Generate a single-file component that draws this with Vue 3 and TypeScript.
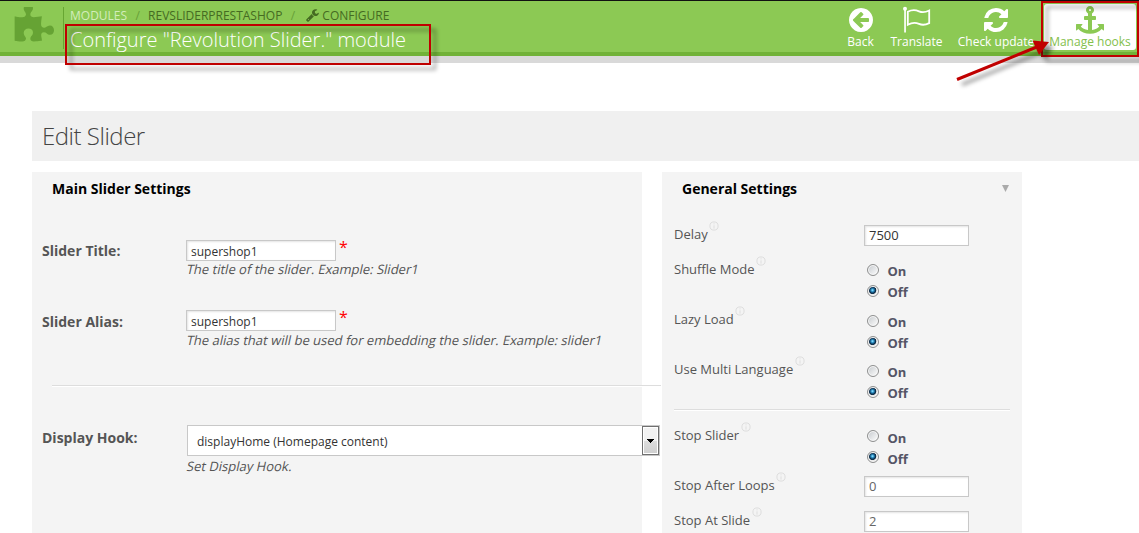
<script setup lang="ts">
interface Crumb { text: string; kind: 'light' | 'dark'; wrench?: boolean }
interface Tool { id: string; label: string; path: string; active?: boolean }
interface Field { label: string; cls: string; value: string; hint: string }
interface Setting { label: string; cls: string; value?: string; divider?: boolean; muted?: boolean }

const puzzle = 'M1755 1083q0 81-44.5 135t-123.5 54q-41 0-77.5-17.5t-59-38-56.5-38-71-17.5q-110 0-110 124 0 39 16 115t15 115v5q-22 0-33 1-34 3-97.5 11.5t-115.5 13.5-98 5q-61 0-103-26.5t-42-83.5q0-37 17.5-71t38-56.5 38-59 17.5-77.5q0-79-54-123.5t-135-44.5q-84 0-143 45.5t-59 127.5q0 43 15 83t33.5 64.5 33.5 53 15 50.5q0 45-46 89-37 35-117 35-95 0-245-24-9-2-27.5-4t-27.5-4l-13-2q-1 0-3-1-2 0-2-1v-1024q2 1 17.5 3.5t34 5 21.5 3.5q150 24 245 24 80 0 117-35 46-44 46-89 0-22-15-50.5t-33.5-53-33.5-64.5-15-83q0-82 59-127.5t144-45.5q80 0 134 44.5t54 123.5q0 41-17.5 77.5t-38 59-38 56.5-17.5 71q0 57 42 83.5t103 26.5q64 0 180-15t163-17v2q-1 2-3.5 17.5t-5 34-3.5 21.5q-24 150-24 245 0 80 35 117 44 46 89 46 22 0 50.5-15t53-33.5 64.5-33.5 83-15q82 0 127.5 59t45.5 143z'
const wrench = 'M448 1472q0-26-19-45t-45-19-45 19-19 45 19 45 45 19 45-19 19-45zm644-420l-682 682q-37 37-90 37-52 0-91-37l-106-108q-38-36-38-90 0-53 38-91l681-681q39 98 114.5 173.5t173.5 114.5zm634-435q0 39-23 106-47 134-164.5 217.5t-258.5 83.5q-185 0-316.5-131.5t-131.5-316.5 131.5-316.5 316.5-131.5q58 0 121.5 16.5t107.5 46.5q16 11 16 28t-16 28l-293 169v224l193 107q5-3 79-48.5t135.5-81 70.5-35.5q15 0 23.5 10t8.5 25z'

const crumbs: Crumb[] = [
  { text: 'MODULES', kind: 'light' },
  { text: 'REVSLIDERPRESTASHOP', kind: 'dark' },
  { text: 'CONFIGURE', kind: 'dark', wrench: true },
]

const tools: Tool[] = [
  { id: 'back', label: 'Back', path: 'M1408 960v-128q0-26-19-45t-45-19h-502l189-189q19-19 19-45t-19-45l-91-91q-18-18-45-18t-45 18l-362 362-91 91q-18 18-18 45t18 45l91 91 362 362q18 18 45 18t45-18l91-91q18-18 18-45t-18-45l-189-189h502q26 0 45-19t19-45zm256-64q0 209-103 385.5t-279.5 279.5-385.5 103-385.5-103-279.5-279.5-103-385.5 103-385.5 279.5-279.5 385.5-103 385.5 103 279.5 279.5 103 385.5z' },
  { id: 'translate', label: 'Translate', path: '' },
  { id: 'update', label: 'Check update', path: 'M1639 1056q0 5-1 7-64 268-268 434.5t-478 166.5q-146 0-282.5-55t-243.5-157l-129 129q-19 19-45 19t-45-19-19-45v-448q0-26 19-45t45-19h448q26 0 45 19t19 45-19 45l-137 137q71 66 161 102t187 36q134 0 250-65t186-179q11-17 53-117 8-23 30-23h192q13 0 22.5 9.5t9.5 22.5zm25-800v448q0 26-19 45t-45 19h-448q-26 0-45-19t-19-45 19-45l138-138q-148-137-349-137-134 0-250 65t-186 179q-11 17-53 117-8 23-30 23h-199q-13 0-22.5-9.5t-9.5-22.5v-7q65-268 270-434.5t480-166.5q146 0 284 55.5t245 156.5l130-129q19-19 45-19t45 19 19 45z' },
  { id: 'hooks', label: 'Manage hooks', active: true, path: 'M960 256q0-26-19-45t-45-19-45 19-19 45 19 45 45 19 45-19 19-45zm832 928v352q0 22-20 30-8 2-12 2-12 0-23-9l-93-93q-119 143-318.5 226.5t-429.5 83.5-429.5-83.5-318.5-226.5l-93 93q-9 9-23 9-4 0-12-2-20-8-20-30v-352q0-14 9-23t23-9h352q22 0 30 20 8 19-7 35l-100 100q67 91 189.5 153.5t271.5 82.5v-647h-192q-26 0-45-19t-19-45v-128q0-26 19-45t45-19h192v-163q-58-34-93-92.5t-35-128.5q0-106 75-181t181-75 181 75 75 181q0 70-35 128.5t-93 92.5v163h192q26 0 45 19t19 45v128q0 26-19 45t-45 19h-192v647q149-20 271.5-82.5t189.5-153.5l-100-100q-15-16-7-35 8-20 30-20h352q14 0 23 9t9 23z' },
]

const fields: Field[] = [
  { label: 'Slider Title:', cls: 'title', value: 'supershop1', hint: 'The title of the slider. Example: Slider1' },
  { label: 'Slider Alias:', cls: 'alias', value: 'supershop1', hint: 'The alias that will be used for embedding the slider. Example: slider1' },
]

const settings: Setting[] = [
  { label: 'Delay', cls: 'h35', value: '7500' },
  { label: 'Shuffle Mode', cls: 'h50' },
  { label: 'Lazy Load', cls: 'h50 low' },
  { label: 'Use Multi Language', cls: 'h50 low', divider: true },
  { label: 'Stop Slider', cls: 'h50 late' },
  { label: 'Stop After Loops', cls: 'h35', value: '0', muted: true },
  { label: 'Stop At Slide', cls: 'h35', value: '2', muted: true },
]
</script>

<template>
  <div class="page">
    <header class="head">
      <svg class="puzzle" viewBox="64 100 1691 1560" preserveAspectRatio="none"><path :d="puzzle" /></svg>
      <div class="heading">
        <nav class="crumbs">
          <template v-for="(c, i) in crumbs" :key="c.text">
            <i v-if="i" class="slash">/</i>
            <svg v-if="c.wrench" class="wrench" viewBox="60 120 1680 1660"><path :d="wrench" /></svg>
            <span :class="c.kind">{{ c.text }}</span>
          </template>
        </nav>
        <h1>Configure "Revolution Slider." module</h1>
      </div>
      <div class="tools">
        <a v-for="t in tools" :key="t.id" :class="['tool', t.id, { active: t.active }]">
          <svg v-if="t.path" class="ticon" viewBox="0 0 1792 1792"><path :d="t.path" /></svg>
          <svg v-else class="ticon flag" viewBox="0 0 28 28">
            <circle cx="2" cy="2.7" r="2" />
            <path d="M1.2 3h1.7v23.500H1.2z" />
            <path class="cloth" d="M4.8 5.7C9 3.600 12 3.600 16 5.300c3.500 1.500 6.500 1 10.200-.8v12.600c-3.800 2-6.800 2.300-10.200.8-4-1.800-7-1.400-11.200.8z" />
          </svg>
          <span>{{ t.label }}</span>
        </a>
      </div>
    </header>

    <div class="edit"><h2>Edit Slider</h2></div>

    <main class="columns">
      <section class="panel main">
        <h3>Main Slider Settings</h3>
        <div v-for="f in fields" :key="f.label" :class="['field', f.cls]">
          <label>{{ f.label }}</label>
          <div class="control">
            <div class="line"><div class="box wide">{{ f.value }}</div><b class="star">*</b></div>
            <em>{{ f.hint }}</em>
          </div>
        </div>
        <div class="rule"></div>
        <div class="field hook">
          <label>Display Hook:</label>
          <div class="control">
            <div class="select">
              <span>displayHome (Homepage content)</span>
              <div class="drop"><svg viewBox="0 0 7 4" shape-rendering="crispEdges"><path d="M0 0h7v1H6v1H5v1H4v1H3V3H2V2H1V1H0z" /></svg></div>
            </div>
            <em>Set Display Hook.</em>
          </div>
        </div>
      </section>

      <section class="panel general">
        <div class="top">
          <h3>General Settings</h3>
          <svg class="tri" viewBox="0 0 7 7"><path d="M0 0h7L3.500 7z" /></svg>
        </div>
        <template v-for="s in settings" :key="s.label">
          <div :class="['setting', s.cls, { muted: s.muted }]">
            <label>{{ s.label }}</label>
            <svg class="info" viewBox="0 0 10 10"><circle cx="5" cy="5" r="4.100" /><path d="M5 2.300v1M5 4.300v3.300" /></svg>
            <div class="value">
              <div v-if="s.value" class="box small">{{ s.value }}</div>
              <template v-else>
                <div class="radio"><i></i><b>On</b></div>
                <div class="radio on"><i></i><b>Off</b></div>
              </template>
            </div>
          </div>
          <div v-if="s.divider" class="divider"></div>
        </template>
      </section>
    </main>

    <svg class="marks" viewBox="0 0 1139 100">
      <g class="shadowed">
        <rect x="66" y="25" width="364" height="39" />
        <rect x="1042" y="2" width="96" height="54" />
      </g>
      <g class="shadowed arrow">
        <path class="shaft" d="M957 79.500L1038 46.500" />
        <path class="tip" d="M1049 42L1032.500 40.500L1039 55z" />
      </g>
    </svg>
  </div>
</template>

<style>
body { margin: 0; background: #fff; overflow: hidden; }
</style>

<style scoped>
.page { position: relative; width: 1139px; height: 533px; overflow: hidden; background: #fff; font-family: "Open Sans", sans-serif; font-size: 13px; color: #555; }
h1, h2, h3 { margin: 0; }
.head { box-sizing: border-box; height: 63px; display: flex; align-items: flex-start; border-top: 1px solid #111; background: linear-gradient(#8cc954 0 51px, #71b238 51px 55px, #d9d9d9 55px); }
.puzzle { width: 40px; height: 37px; margin: 6px 0 0 14px; fill: #66a334; flex: none; }
.heading { margin: 6px 0 0 9px; border-left: 1px solid #67a632; height: 42px; padding-left: 6px; width: 400px; flex: none; white-space: nowrap; }
.crumbs { display: flex; align-items: center; height: 17px; font-size: 12px; line-height: 17px; }
.light { color: #d3edbb; }
.dark { color: #456b22; }
.slash { font-style: normal; color: #67a038; width: 21px; text-align: center; flex: none; }
.wrench { width: 13px; height: 13px; fill: #456b22; margin: 0 3px 0 3px; }
h1 { font-weight: 300; font-size: 20px; line-height: 32px; color: #fff; }
.tools { margin-left: auto; display: flex; height: 52px; padding: 3px 3px 0 0; }
.tool { box-sizing: border-box; display: flex; flex-direction: column; align-items: center; height: 46px; color: #fff; fill: #fff; font-size: 12px; line-height: 16px; padding: 2px 0 0; white-space: nowrap; }
.ticon { width: 28px; height: 28px; overflow: visible; }
.back { width: 56px; }
.translate { width: 56px; }
.update { width: 103px; margin-right: -3.5px; }
.hooks { width: 92px; }
.active { background: #fff; border-radius: 3px; color: #83c04c; fill: #8cc954; }
.cloth { fill: none; stroke: #fff; stroke-width: 1.8; }
.edit { height: 50px; margin: 48px 0 0 32px; padding-left: 10px; background: #f0f0f0; }
h2 { font-weight: 300; font-size: 24px; line-height: 50px; letter-spacing: -0.48px; color: #444; }
.columns { display: flex; gap: 20px; margin: 11px 0 0 32px; height: 361px; }
.panel { background: #f4f4f4; height: 361px; }
.main { width: 610px; }
.general { width: 360px; }
h3 { font-weight: 700; font-size: 14px; line-height: 34px; color: #000; padding-left: 20px; }
.field { display: grid; grid-template-columns: 144px 1fr; padding-left: 10px; }
.field label { font-weight: 700; font-size: 14px; line-height: 22px; }
.title { margin-top: 34px; height: 70px; }
.alias { height: 75px; }
.alias label { line-height: 24px; }
.line { display: flex; height: 21px; }
.box { box-sizing: border-box; height: 21px; border: 1px solid #c8c8c8; background: #fff; box-shadow: inset 1px 1px 2px #e4e4e4; color: #333; line-height: 19px; padding-left: 4px; }
.wide { width: 150px; font-size: 12px; line-height: 21px; }
.small { width: 105px; }
.star { color: #f00; font-size: 16px; font-weight: 400; line-height: 15px; margin-left: 3px; }
em { display: block; font-style: normal; transform: skewX(-12deg); transform-origin: 0 50%; line-height: 18px; padding-left: 1px; letter-spacing: 0.01px; white-space: nowrap; }
.title em { line-height: 16px; }
.rule { width: 609px; height: 1px; margin-left: 20px; background: #ddd; box-shadow: 0 1px #fff; }
.hook { margin-top: 39px; }
.hook label { padding-top: 2px; }
.select { box-sizing: border-box; display: flex; justify-content: space-between; width: 473px; height: 31px; margin-left: 1px; border: 1px solid #c8c8c8; background: #fff; line-height: 31px; padding-left: 9px; font-size: 12px; color: #333; }
.hook em { line-height: 21px; }
.drop { box-sizing: border-box; width: 17px; height: 29px; border: 1px solid #707070; box-shadow: inset 0 0 0 1px #fff; background: linear-gradient(#f2f2f2 50%, #ddd 51%, #cfcfcf); display: flex; align-items: center; justify-content: center; }
.drop svg { width: 7px; height: 4px; fill: #000; }
.top { display: flex; justify-content: space-between; height: 53px; }
.tri { width: 7px; height: 7px; margin: 13px 13px 0 0; fill: #aaa; }
.setting { display: flex; align-items: flex-start; height: 50px; padding-left: 12px; width: 336px; }
.h35 { height: 35px; }
.setting label { line-height: 19px; }
.info { width: 10px; height: 10px; margin: -4px 0 0 1.5px; fill: none; stroke: #dedede; stroke-width: 1; overflow: visible; }
.value { width: 146px; margin-left: auto; }
.low .value { padding-top: 1px; }
.muted .box { color: #666; }
.radio { display: flex; align-items: center; height: 21px; }
.radio i { box-sizing: border-box; width: 12px; height: 12px; margin: -2px 8.5px 0 3px; border: 1px solid #8e8f8f; border-radius: 50%; box-shadow: inset 0 0 0 1px #f8f8f8; background: linear-gradient(135deg, #c5c9cd, #fff); }
.radio.on i { background: radial-gradient(circle at 45% 42%, #7fd4f7 0 6%, #2a8fc4 18%, #0b2c4a 38%, #17364f 44%, #e8e8e8 52%); }
.radio b { color: #556; line-height: 21px; padding-top: 2px; }
.late .radio b { padding-top: 4px; }
.divider { height: 1px; width: 336px; margin: -1px 0 16px 12px; background: #ddd; box-shadow: 0 1px #fff; }
.marks { position: absolute; left: 0; top: 0; width: 1139px; height: 100px; pointer-events: none; }
.shadowed { fill: none; stroke: #c00000; stroke-width: 2; filter: drop-shadow(5px 5px 2px rgba(0, 0, 0, .4)); }
.shadowed .tip { fill: #c00000; stroke: none; }
.shadowed .shaft { stroke-width: 3; }
</style>
